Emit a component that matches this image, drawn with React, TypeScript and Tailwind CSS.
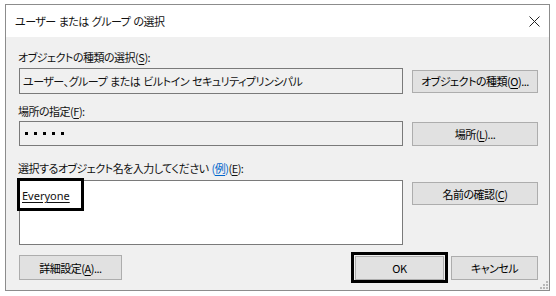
import React from 'react';

const Btn: React.FC<{ children: React.ReactNode; className?: string }> = ({ children, className = '' }) => (
  <button
    type="button"
    className={`flex shrink-0 items-center justify-center whitespace-nowrap border border-[#adadad] bg-[#e1e1e1] text-black ${className}`}
  >
    {children}
  </button>
);

const U: React.FC<{ children: React.ReactNode }> = ({ children }) => <span className="underline underline-offset-2">{children}</span>;

const App: React.FC = () => {
  return (
    <div className="h-[296px] w-[556px] bg-white pl-[5px] pt-[4px] font-['Noto_Sans_CJK_JP','Noto_Sans',sans-serif] text-[11px] leading-[16px] tracking-[-0.5px] text-[#111] [font-feature-settings:'palt'] [word-spacing:1px]">
      <div className="relative flex h-[287px] w-[545px] flex-col border border-[#8c8c8c] bg-[#f0f0f0]">
        {/* Title bar */}
        <div className="flex h-[32px] shrink-0 items-center justify-between bg-white pl-[9px] pr-[9px]">
          <span className="whitespace-nowrap">ユーザー または グループ の選択</span>
          <svg width="11" height="11" viewBox="0 0 11 11" className="text-[#222]">
            <path d="M0.5 0.5 L10.5 10.5 M10.5 0.5 L0.5 10.5" stroke="currentColor" strokeWidth="1" fill="none" />
          </svg>
        </div>

        {/* Body */}
        <div className="flex flex-1 flex-col pl-[13px] pr-[11px] pt-[12px]">
          <div className="-ml-px whitespace-nowrap">
            オブジェクトの種類の選択(<U>S</U>):
          </div>
          <div className="mt-[3px] flex items-center gap-[9px]">
            <div className="flex h-[26px] w-[384px] items-center whitespace-nowrap border border-[#7a7a7a] bg-[#f0f0f0] pl-[3px]">
              ユーザー、グループ または ビルトイン セキュリティプリンシパル
            </div>
            <Btn className="h-[23px] w-[126px]">
              オブジェクトの種類(<U>O</U>)...
            </Btn>
          </div>

          <div className="-ml-px mt-[9px] whitespace-nowrap">
            場所の指定(<U>F</U>):
          </div>
          <div className="mt-[2px] flex items-center gap-[9px]">
            <div className="flex h-[25px] w-[384px] items-center gap-[6px] border border-[#7a7a7a] bg-[#f0f0f0] pl-[5px]">
              {[0, 1, 2, 3, 4].map((i) => (
                <span key={i} className="h-[3px] w-[3px] bg-black" />
              ))}
            </div>
            <Btn className="h-[24px] w-[126px]">
              場所(<U>L</U>)...
            </Btn>
          </div>

          <div className="-ml-px mt-[14px] whitespace-nowrap">
            選択するオブジェクト名を入力してください
            <span className="ml-[3px] text-[#0066cc]">
              (<U>例</U>)
            </span>
            (<U>E</U>):
          </div>
          <div className="mt-[4px] flex items-start gap-[9px]">
            <div className="relative h-[65px] w-[384px] border border-[#7a7a7a] bg-white pl-[2px] pt-[6px]">
              <span className="font-['Noto_Sans',sans-serif] tracking-normal underline underline-offset-2">Everyone</span>
              <div className="absolute left-[-3px] top-[-3px] h-[33px] w-[67px] border-[3px] border-black" />
            </div>
            <Btn className="mt-[2px] h-[23px] w-[126px]">
              名前の確認(<U>C</U>)
            </Btn>
          </div>

          {/* Bottom buttons */}
          <div className="mt-[7px] flex h-[31px] items-center">
            <Btn className="h-[25px] w-[103px]">
              詳細設定(<U>A</U>)...
            </Btn>
            <div className="flex-1" />
            <div className="flex h-[31px] w-[97px] items-center justify-center border-[3px] border-black">
              <Btn className="h-[24px] w-[89px]">OK</Btn>
            </div>
            <Btn className="ml-[3px] h-[24px] w-[87px]">キャンセル</Btn>
          </div>
        </div>

        {/* Resize grip */}
        <svg width="8" height="8" viewBox="0 0 8 8" className="absolute bottom-[1px] right-[1px] text-[#b8b8b8]">
          <rect x="6" y="0" width="2" height="2" fill="currentColor" />
          <rect x="3" y="3" width="2" height="2" fill="currentColor" />
          <rect x="6" y="3" width="2" height="2" fill="currentColor" />
          <rect x="0" y="6" width="2" height="2" fill="currentColor" />
          <rect x="3" y="6" width="2" height="2" fill="currentColor" />
          <rect x="6" y="6" width="2" height="2" fill="currentColor" />
        </svg>
      </div>
    </div>
  );
};

export default App;
